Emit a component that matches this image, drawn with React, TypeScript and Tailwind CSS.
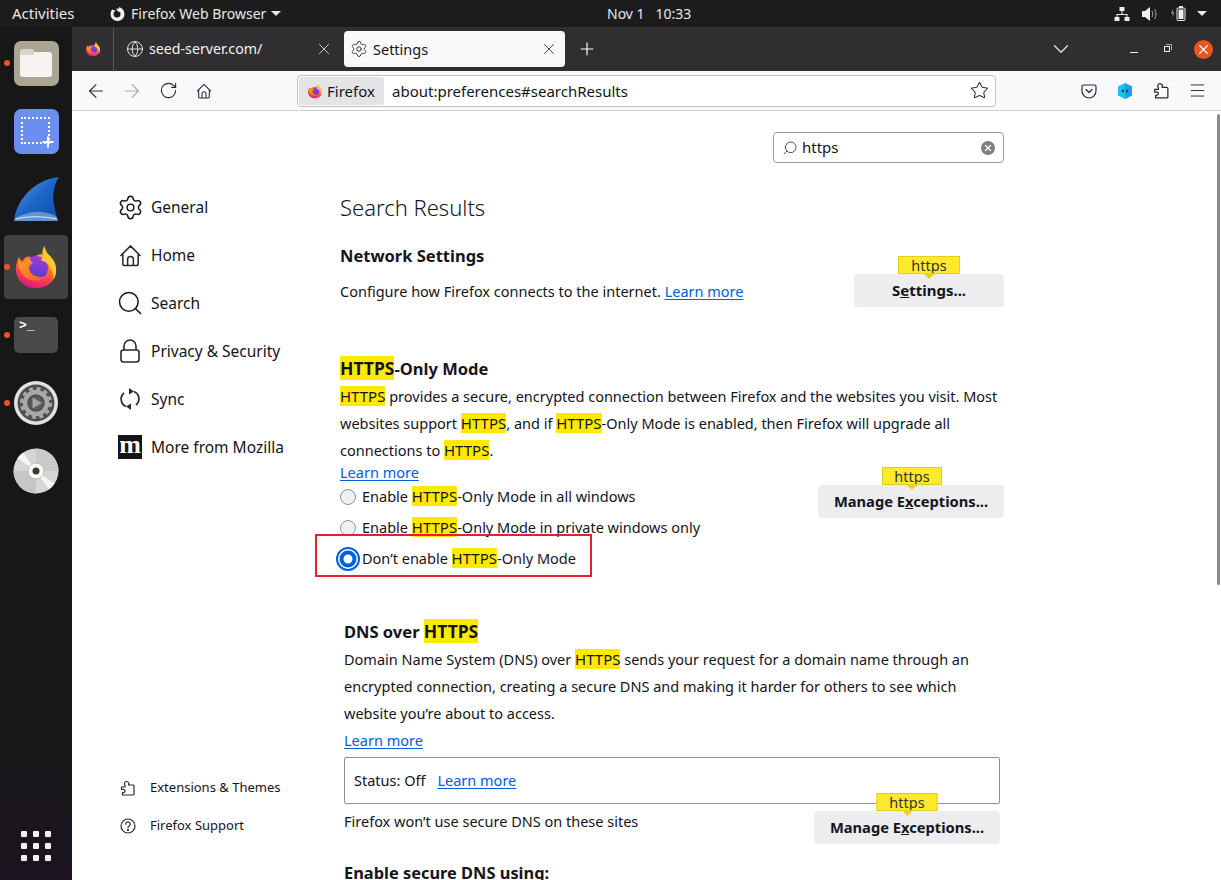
import React from 'react';
import { ChevronDown, Globe, Plus, RotateCw, Settings, Star, X, ArrowLeft, ArrowRight, Menu, Search } from 'lucide-react';

const FirefoxLogo: React.FC<{ size: number }> = ({ size }) => (
  <svg width={size} height={size} viewBox="0 0 48 48" className="block shrink-0">
    <defs>
      <linearGradient id="ffBody" x1="0.7" y1="0" x2="0.35" y2="1">
        <stop offset="0" stopColor="#ffd43a" />
        <stop offset="0.45" stopColor="#ff7a2b" />
        <stop offset="0.8" stopColor="#f5325b" />
        <stop offset="1" stopColor="#e31587" />
      </linearGradient>
      <linearGradient id="ffBall" x1="0.6" y1="0" x2="0.4" y2="1">
        <stop offset="0" stopColor="#a13be0" />
        <stop offset="1" stopColor="#4f3fc4" />
      </linearGradient>
      <linearGradient id="ffSwoop" x1="0" y1="0" x2="1" y2="0.8">
        <stop offset="0" stopColor="#ffa21f" />
        <stop offset="1" stopColor="#ff5a2a" />
      </linearGradient>
    </defs>
    <path d="M33 2c.5 4.500 2 7 5 10 3.500 3.500 7 8 7 15 0 11-9 19-21 19C12 46 3 37 3 26c0-5 1.500-9 3.500-12.500.5 2 1.500 3.500 3 4.500 1.500-3 4-4.500 7-5 3 1 5 1 7 0 2.500-2 5-3 7-2C30.500 8 31 5 33 2z" fill="url(#ffBody)" />
    <circle cx="24" cy="25" r="12.500" fill="url(#ffBall)" />
    <path d="M6 15c-1 6 0 12 4 17 4 5 10 7 16 6 4-.5 7-2.500 9-5-3 1.500-7 2-11 .5-5-1.500-8-6-7-10 .5-2 2-3 4-3.500-2-1.500-3-3-3-4.500-3 0-6 1-8 4.500-2-1-3.500-3-4-5z" fill="url(#ffSwoop)" />
    <path d="M33 2c.5 4.500 2 7 5 10 3.500 3.500 7 8 7 15 0 4-1 7-3 10 .5-5-1-10-4-14-2-3-5-5-9-6 1-2 2-3 3-4 0-4 .5-8 1-11z" fill="#ffc62e" />
  </svg>
);

const WiresharkFin = () => (
  <svg width="46" height="46" viewBox="0 0 46 46" className="block">
    <defs>
      <linearGradient id="finBlue" x1="0" y1="0" x2="1" y2="1">
        <stop offset="0" stopColor="#5f9fe4" />
        <stop offset="0.5" stopColor="#1c66c8" />
        <stop offset="1" stopColor="#0f4ea8" />
      </linearGradient>
    </defs>
    <path d="M1 45C3 26 19 4 46 1c-5 8-7 18-5 28 1 6 3 11 4 16H1z" fill="url(#finBlue)" />
    <path d="M2 42c8-3 16-7 26-6 6 .5 11 2 15 4l2 5H1z" fill="#6f9fd2" opacity="0.85" />
    <path d="M3 43c12-3 26-3 41 0" stroke="#e3eef8" strokeWidth="1" fill="none" />
  </svg>
);

const GearPlayer = () => (
  <svg width="46" height="46" viewBox="0 0 46 46" className="block">
    <circle cx="23" cy="23" r="22" fill="#e2e2e2" />
    <circle cx="23" cy="23" r="18.500" fill="#4e4e4e" />
    <circle cx="23" cy="23" r="11" fill="none" stroke="#a9a9a9" strokeWidth="4.500" />
    <circle cx="23" cy="23" r="14.500" fill="none" stroke="#a9a9a9" strokeWidth="3" strokeDasharray="4 3.600" />
    <circle cx="23" cy="23" r="7" fill="#5a5a5a" />
    <path d="M19.500 17.500L29 23l-9.500 5.500z" fill="#a4a4a4" />
  </svg>
);

const Disc = () => (
  <svg width="46" height="46" viewBox="0 0 46 46" className="block">
    <circle cx="23" cy="23" r="22.500" fill="#d6d6d6" />
    <path d="M23 23V.5A22.500 22.500 0 0 1 45.500 23z" fill="#cacaca" />
    <path d="M23 23v22.500A22.500 22.500 0 0 1 .5 23z" fill="#c6c6c6" />
    <path d="M23 23L4.500 10.200A22.500 22.500 0 0 1 10.200 4.500z" fill="#f6f6f6" />
    <path d="M23 23l18.500 12.800A22.500 22.500 0 0 1 35.800 41.500z" fill="#f6f6f6" />
    <circle cx="23" cy="23" r="8" fill="#fbfbf8" stroke="#b9ad98" strokeWidth="0.800" />
    <circle cx="23" cy="23" r="3.500" fill="#3a3a3a" />
  </svg>
);

const DockItem: React.FC<{ running?: boolean; active?: boolean; children: React.ReactNode }> = ({ running, active, children }) => (
  <div className="relative h-[68px] flex items-center justify-center">
    {active && <div className="absolute left-[4px] top-[2px] w-[64px] h-[64px] rounded-[4px] bg-[#414141]" />}
    {running && <div className="absolute left-[4px] top-[31px] w-[6px] h-[6px] rounded-full bg-[#e95420]" />}
    <div className="relative">{children}</div>
  </div>
);

const Dock = () => (
  <div className="w-[72px] shrink-0 h-[853px] bg-[#171717] flex flex-col justify-between pt-[2px] pb-[19px] bg-gradient-to-b from-[#171717] from-80% to-[#1c1520]">
    <div className="flex flex-col">
      <DockItem running>
        <div className="w-[45px] h-[45px] rounded-[7px] bg-[#aba594] flex items-center justify-center">
          <div className="relative w-[32px] h-[25px] mt-[3px] rounded-[3px] bg-[#f6f5f2]">
            <div className="absolute -top-[3px] left-0 w-[14px] h-[6px] rounded-t-[3px] bg-[#d9d5cb]" />
          </div>
        </div>
      </DockItem>
      <DockItem>
        <div className="relative w-[45px] h-[45px] rounded-[7px] bg-[#6a8ff0]">
          <div className="absolute left-[7px] top-[8px] w-[29px] h-[27px] border-2 border-dotted border-white" />
          <Plus className="absolute left-[26px] top-[25px] w-[16px] h-[16px] text-white" strokeWidth={3} />
        </div>
      </DockItem>
      <DockItem>
        <WiresharkFin />
      </DockItem>
      <DockItem running active>
        <FirefoxLogo size={46} />
      </DockItem>
      <DockItem running>
        <div className="relative w-[44px] h-[36px] rounded-[5px] bg-[#4a4a4a]">
          <span className="absolute left-[5px] top-[1px] text-[13px] leading-[16px] text-white font-['Liberation_Mono',monospace] font-bold">&gt;_</span>
        </div>
      </DockItem>
      <DockItem running>
        <GearPlayer />
      </DockItem>
      <DockItem>
        <Disc />
      </DockItem>
    </div>
    <div className="grid grid-cols-3 gap-[6px] w-[30px] mx-auto">
      {Array.from({ length: 9 }).map((_, i) => (
        <div key={i} className="w-[6px] h-[6px] rounded-[1px] bg-[#f2f2f2]" />
      ))}
    </div>
  </div>
);

const TopBar = () => (
  <div className="h-[27px] bg-[#1c1c1c] flex items-center text-[14px] text-[#e8e8e8]">
    <div className="w-[607px] shrink-0 flex items-center">
      <span className="ml-[12px] w-[98px] text-[15px]">Activities</span>
      <svg width="15" height="15" viewBox="0 0 15 15" className="block shrink-0">
        <circle cx="7.500" cy="8" r="7" fill="#f2f2f2" />
        <circle cx="7" cy="8" r="3.500" fill="#1c1c1c" />
        <path d="M3 0l6 1-1 5-2-1.500L2.500 4z" fill="#1c1c1c" />
        <path d="M6 2.500l5 .5-2 3.500z" fill="#f2f2f2" />
      </svg>
      <span className="ml-[6px]">Firefox Web Browser</span>
      <div className="ml-[5px] w-0 h-0 border-x-[5px] border-x-transparent border-t-[5px] border-t-[#e8e8e8]" />
    </div>
    <span className="w-[85px] whitespace-pre">Nov 1   10:33</span>
    <div className="flex-1 flex items-center justify-end pr-[14px]">
      <svg width="16" height="14" viewBox="0 0 16 14" className="mr-[12px]" fill="#eee">
        <rect x="5.500" y="0" width="5" height="4" />
        <rect x="0.500" y="10" width="5" height="4" />
        <rect x="10.500" y="10" width="5" height="4" />
        <path d="M7.500 4h1v3h5v3h-1V8H3.500v2h-1V7h5z" />
      </svg>
      <svg width="16" height="14" viewBox="0 0 16 14" className="mr-[12px]" fill="none">
        <path d="M0 4h3l5-4v14l-5-4H0z" fill="#eee" />
        <path d="M10 4c1 1.500 1 4.500 0 6M12.500 2c2 2.500 2 7.500 0 10" stroke="#aaa" />
      </svg>
      <svg width="16" height="15" viewBox="0 0 16 15" className="mr-[11px]" fill="none">
        <path d="M3 3L1 7.500h2L2 12l2.500-5.500H3z" fill="#999" />
        <rect x="7" y="2" width="8" height="12.500" rx="1" stroke="#eee" />
        <rect x="9" y="0" width="4" height="2" fill="#eee" />
        <rect x="8.500" y="3.500" width="5" height="9.500" fill="#eee" />
      </svg>
      <div className="w-0 h-0 border-x-[5px] border-x-transparent border-t-[5px] border-t-[#e8e8e8]" />
    </div>
  </div>
);

const TabBar = () => (
  <div className="h-[44px] bg-[#302e30] flex items-center text-[14.500px] text-[#f2f2f2]">
    <div className="w-[42px] h-[44px] shrink-0 flex items-center justify-center border-r border-[#5a585a]">
      <FirefoxLogo size={16} />
    </div>
    <div className="w-[230px] shrink-0 h-[36px] flex items-center pl-[12px]">
      <Globe className="w-[18px] h-[18px] text-[#e6e6e6]" strokeWidth={1.300} />
      <span className="ml-[5px] flex-1 text-[14.200px]">seed-server.com/</span>
      <X className="w-[18px] h-[18px] mr-[11px] text-[#dddddd]" strokeWidth={1.200} />
    </div>
    <div className="w-[221px] shrink-0 h-[36px] rounded-[4px] bg-[#f9f9fb] text-[#15141a] flex items-center pl-[6px]">
      <Settings className="w-[18px] h-[18px] text-[#333]" strokeWidth={1.300} />
      <span className="ml-[5px] flex-1 pt-[1px]">Settings</span>
      <X className="w-[18px] h-[18px] mr-[7px] text-[#333]" strokeWidth={1.200} />
    </div>
    <Plus className="ml-[12px] w-[20px] h-[20px] text-white" strokeWidth={1.400} />
    <div className="flex-1 flex items-center justify-end">
      <ChevronDown className="w-[26px] h-[26px] text-[#e6e6e6] mr-[56px]" strokeWidth={1.100} />
      <div className="w-[8px] h-px bg-[#eee] mt-[6px] mr-[26px]" />
      <div className="relative w-[8px] h-[8px] mr-[22px]">
        <div className="absolute -top-[1.500px] left-[2px] w-[6px] h-[6px] border-t border-r border-[#aaa]" />
        <div className="absolute inset-0 w-[6px] h-[6px] top-[1px] border border-[#eee]" />
      </div>
      <div className="w-[19px] h-[19px] rounded-full bg-[#e95420] flex items-center justify-center mr-[8px]">
        <X className="w-[15px] h-[15px] text-white" strokeWidth={2} />
      </div>
    </div>
  </div>
);

const PuzzleIcon: React.FC<{ size: number; color?: string }> = ({ size, color = '#2b2a33' }) => (
  <svg width={size} height={size} viewBox="0 0 16 16" fill="none" stroke={color} strokeWidth="1.200" strokeLinejoin="round" className="block shrink-0">
    <path d="M1.500 9.500V7H5V5.500C4 4 4.500 1.500 6.500 1.500S9.500 3.500 8.500 5H13a1 1 0 0 1 1 1v8a1 1 0 0 1-1 1H2.500V12.500C4 13 5 12 5 11S4 9 2.500 9.500z" />
  </svg>
);

const HomeIcon: React.FC<{ size: number }> = ({ size }) => (
  <svg width={size} height={size} viewBox="0 0 24 24" fill="none" stroke="#2b2a33" strokeWidth="1.600" strokeLinejoin="round" className="block shrink-0">
    <path d="M1.500 12.500L12 2l10.500 10.500M4 10.500V20.500a2 2 0 0 0 2 2h12a2 2 0 0 0 2-2V10.500" />
    <path d="M9 22.500V16a3 3 0 0 1 6 0v6.500" />
  </svg>
);

const ToolBtn: React.FC<{ children: React.ReactNode }> = ({ children }) => (
  <div className="w-[36px] h-[36px] flex items-center justify-center shrink-0">{children}</div>
);

const Toolbar = () => (
  <div className="h-[40px] bg-[#f9f9fb] border-b border-[#cccccc] flex items-center pl-[6px] text-[#2b2a33]">
    <ToolBtn><ArrowLeft className="w-[22px] h-[22px]" strokeWidth={1.200} /></ToolBtn>
    <ToolBtn><ArrowRight className="w-[22px] h-[22px] text-[#a9a9ad]" strokeWidth={1.200} /></ToolBtn>
    <ToolBtn><RotateCw className="w-[19px] h-[19px]" strokeWidth={1.400} /></ToolBtn>
    <ToolBtn><HomeIcon size={16} /></ToolBtn>
    <div className="ml-[75px] w-[699px] h-[32px] rounded-[4px] bg-white border border-[#c0c0c0] flex items-center pl-[1px] pr-[6px] shrink-0">
      <div className="w-[85px] h-[28px] rounded-[3px] bg-[#e4e4e6] flex items-center pl-[8px] gap-[4px] text-[15px] text-[#15141a]">
        <FirefoxLogo size={16} />
        <span className="pt-[1px]">Firefox</span>
      </div>
      <span className="ml-[8px] flex-1 text-[15px] pt-[1px] text-[#15141a]">about:preferences#searchResults</span>
      <Star className="w-[19px] h-[19px]" strokeWidth={1.300} />
    </div>
    <div className="ml-[75px] flex">
      <ToolBtn>
        <svg width="16" height="16" viewBox="0 0 16 16" fill="none" stroke="#2b2a33" strokeWidth="1.200">
          <path d="M2.500 2h11A1.500 1.500 0 0 1 15 3.500V8a7 7 0 0 1-14 0V3.500A1.500 1.500 0 0 1 2.500 2z" />
          <path d="M5 6.500l3 3 3-3" strokeLinecap="round" strokeLinejoin="round" />
        </svg>
      </ToolBtn>
      <ToolBtn>
        <svg width="16" height="18" viewBox="0 0 16 18">
          <path d="M8 1l7 3.500v9L8 17l-7-3.500v-9z" fill="#14c4f5" />
          <path d="M8 1l7 3.500v9L8 17z" fill="#1e90f5" opacity="0.7" />
          <path d="M4 9l3-2v4zM12 9L9 7v4z" fill="#3a3a3a" />
        </svg>
      </ToolBtn>
      <ToolBtn><PuzzleIcon size={17} /></ToolBtn>
      <ToolBtn><Menu className="w-[19px] h-[19px]" strokeWidth={1.200} /></ToolBtn>
    </div>
  </div>
);

const NavItem: React.FC<{ icon: React.ReactNode; label: string }> = ({ icon, label }) => (
  <div className="h-[48px] flex items-center text-[15.500px] text-[#15141a]">
    <div className="w-[24px] flex items-center justify-center shrink-0">{icon}</div>
    <span className="ml-[9px] pt-[2px] whitespace-nowrap">{label}</span>
  </div>
);

const Sidebar = () => (
  <div className="w-[268px] shrink-0 pl-[46px] pt-[72px] pb-[35px] flex flex-col justify-between">
    <div>
      <NavItem icon={<Settings className="w-[27px] h-[27px] shrink-0" strokeWidth={1.300} />} label="General" />
      <NavItem icon={<HomeIcon size={23} />} label="Home" />
      <NavItem icon={<Search className="w-[28px] h-[28px] shrink-0" strokeWidth={1.300} />} label="Search" />
      <NavItem
        icon={
          <svg width="20" height="24" viewBox="0 0 20 24" fill="none" stroke="#2b2a33" strokeWidth="1.600">
            <path d="M4 11V7a6 6 0 0 1 12 0v4" />
            <rect x="1" y="11" width="18" height="12" rx="2.500" />
          </svg>
        }
        label="Privacy & Security"
      />
      <NavItem
        icon={
          <svg width="22" height="24" viewBox="0 0 22 24" fill="none" stroke="#2b2a33" strokeWidth="1.700">
            <path d="M17 18a8 8 0 0 0-2-13.500M5 6a8 8 0 0 0 2 13.500" />
            <path d="M10 1l5 3.500-5 3zM12 23l-5-3.500 5-3z" fill="#2b2a33" stroke="none" />
          </svg>
        }
        label="Sync"
      />
      <NavItem
        icon={
          <div className="w-[24px] h-[24px] bg-[#15141a] flex items-center justify-center">
            <span className="text-white text-[26px] leading-[20px] font-bold font-['Liberation_Serif',serif] pb-[5px]">m</span>
          </div>
        }
        label="More from Mozilla"
      />
    </div>
    <div>
      <div className="h-[38px] flex items-center text-[13px] text-[#15141a]">
        <div className="w-[20px] flex justify-center"><PuzzleIcon size={16} /></div>
        <span className="ml-[12px]">Extensions &amp; Themes</span>
      </div>
      <div className="h-[38px] flex items-center text-[13px] text-[#15141a]">
        <div className="w-[20px] flex justify-center">
          <svg width="16" height="16" viewBox="0 0 16 16" fill="none" stroke="#2b2a33" strokeWidth="1.200">
            <circle cx="8" cy="8" r="7" />
            <path d="M5.800 6.200a2.200 2.200 0 1 1 3.400 1.800c-.8.500-1.200 1-1.200 1.800" strokeLinecap="round" />
            <circle cx="8" cy="12" r="0.500" fill="#2b2a33" />
          </svg>
        </div>
        <span className="ml-[12px]">Firefox Support</span>
      </div>
    </div>
  </div>
);

const Hl: React.FC<{ children: React.ReactNode }> = ({ children }) => (
  <span className="bg-[#ffe900] text-[15px]">{children}</span>
);

const HlBold: React.FC<{ children: React.ReactNode }> = ({ children }) => (
  <span className="bg-[#ffe900] text-[17.500px]">{children}</span>
);

const Link: React.FC<{ children: React.ReactNode }> = ({ children }) => (
  <span className="text-[#0060df] underline underline-offset-2">{children}</span>
);

const Tip: React.FC<{ w: string }> = ({ w }) => (
  <div className={`absolute -top-[18px] left-1/2 -translate-x-1/2 ${w} h-[18px] bg-[#ffe92c] border border-[#e0cf1c] flex items-center justify-center text-[14.500px] font-normal text-[#333] leading-none`}>
    https
    <div className="absolute left-1/2 -bottom-[6px] -translate-x-1/2 w-0 h-0 border-x-[6px] border-x-transparent border-t-[6px] border-t-[#e8d41e]" />
  </div>
);

const Radio: React.FC<{ children: React.ReactNode; on?: boolean }> = ({ children, on }) => (
  <div className="h-[31px] flex items-center">
    <div className="relative w-[16px] h-[16px] shrink-0">
      <div className="w-[16px] h-[16px] rounded-full bg-[#f0f0f4] border border-[#8f8f9d]" />
      {on && (
        <svg width="24" height="24" viewBox="0 0 24 24" className="absolute -left-[4px] -top-[4px]" fill="none">
          <circle cx="12" cy="12" r="11" fill="#fff" stroke="#0060df" strokeWidth="2" />
          <circle cx="12" cy="12" r="6.500" stroke="#0060df" strokeWidth="4" />
        </svg>
      )}
    </div>
    <span className="ml-[6px] whitespace-nowrap">{children}</span>
  </div>
);

const Button: React.FC<{ w: string; tip: string; children: React.ReactNode }> = ({ w, tip, children }) => (
  <div className={`relative ${w} h-[33px] shrink-0 rounded-[4px] bg-[#ededf0] flex items-center justify-center font-bold text-[14.700px] text-[#15141a]`}>
    <Tip w={tip} />
    <span>{children}</span>
  </div>
);

const Main = () => (
  <div className="w-[664px] shrink-0 pt-[21px] text-[14.500px] text-[#15141a] relative">
    <div className="flex justify-end">
      <div className="w-[231px] h-[31px] rounded-[4px] border border-[#9a9a9f] flex items-center pl-[9px] pr-[8px] text-[15px]">
        <Search className="w-[16px] h-[16px] text-[#333] -scale-x-100 -ml-[1px] -mr-[1px]" strokeWidth={1.300} />
        <span className="ml-[5px] flex-1">https</span>
        <div className="w-[14px] h-[14px] rounded-full bg-[#808080] flex items-center justify-center">
          <X className="w-[10px] h-[10px] text-white" strokeWidth={3} />
        </div>
      </div>
    </div>

    <h1 className="mt-[29px] text-[22px] leading-[30px] font-light">Search Results</h1>

    <h2 className="mt-[22px] text-[16.500px] leading-[24px] font-bold">Network Settings</h2>
    <div className="mt-[6px] flex items-center justify-between">
      <p className="mt-[2px]">Configure how Firefox connects to the internet. <Link>Learn more</Link></p>
      <Button w="w-[150px]" tip="w-[62px]"><span className="text-[15px]">S<span className="underline">e</span>ttings...</span></Button>
    </div>

    <h2 className="mt-[49px] text-[16.500px] leading-[24px] font-bold"><HlBold>HTTPS</HlBold>-Only Mode</h2>
    <p className="mt-[2px] leading-[27px] whitespace-nowrap">
      <Hl>HTTPS</Hl> provides a secure, encrypted connection between Firefox and the websites you visit. Most<br />
      websites support <Hl>HTTPS</Hl>, and if <Hl>HTTPS</Hl>-Only Mode is enabled, then Firefox will upgrade all<br />
      connections to <Hl>HTTPS</Hl>.
    </p>
    <div className="-mt-[1px] leading-[18px]"><Link>Learn more</Link></div>
    <div className="flex justify-between items-start">
      <div className="relative">
        <Radio>Enable <Hl>HTTPS</Hl>-Only Mode in all windows</Radio>
        <Radio>Enable <Hl>HTTPS</Hl>-Only Mode in private windows only</Radio>
        <Radio on>Don’t enable <Hl>HTTPS</Hl>-Only Mode</Radio>
        {/* red annotation box */}
        <div className="absolute -left-[25px] top-[53px] w-[277px] h-[43px] border-2 border-[#e5202e]" />
      </div>
      <div className="mt-[4px]">
        <Button w="w-[186px]" tip="w-[60px] ml-[1px]">Manage E<span className="underline">x</span>ceptions...</Button>
      </div>
    </div>

    <div className="px-[4px]">
      <h2 className="mt-[45px] text-[16.500px] leading-[24px] font-bold">DNS over <HlBold>HTTPS</HlBold></h2>
      <p className="mt-[2px] leading-[27px] whitespace-nowrap">
        Domain Name System (DNS) over <Hl>HTTPS</Hl> sends your request for a domain name through an<br />
        encrypted connection, creating a secure DNS and making it harder for others to see which<br />
        website you’re about to access.
      </p>
      <div className="mt-[4px] leading-[18px]"><Link>Learn more</Link></div>
      <div className="mt-[8px] h-[47px] rounded-[2px] border border-[#8f8f9d] flex items-center pl-[9px]">
        Status: Off<span className="ml-[12px]"><Link>Learn more</Link></span>
      </div>
      <div className="mt-[7px] flex justify-between items-start">
        <span className="leading-[20px]">Firefox won’t use secure DNS on these sites</span>
        <Button w="w-[186px]" tip="w-[61px]">Manage E<span className="underline">x</span>ceptions...</Button>
      </div>
      <h2 className="mt-[17px] text-[16.400px] leading-[24px] font-bold">Enable secure DNS using:</h2>
    </div>
  </div>
);

const App: React.FC = () => {
  return (
    <div className="w-[1221px] h-[880px] overflow-hidden bg-white font-['Noto_Sans',sans-serif]">
      <TopBar />
      <div className="flex">
        <Dock />
        <div className="flex-1 min-w-0">
          <TabBar />
          <Toolbar />
          <div className="relative h-[769px] overflow-hidden flex bg-white">
            <Sidebar />
            <Main />
            {/* scrollbar thumb */}
            <div className="absolute right-[1px] top-[3px] w-[3px] h-[471px] rounded-full bg-[#8a8a8a]" />
          </div>
        </div>
      </div>
    </div>
  );
};

export default App;
